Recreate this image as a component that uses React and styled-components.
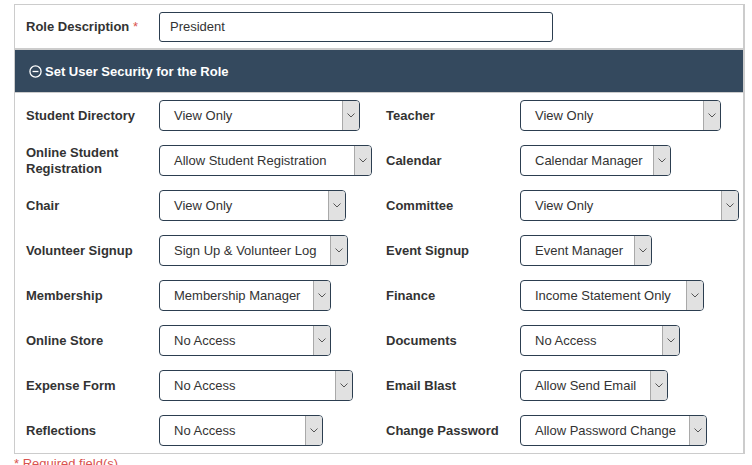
import React from "react";
import styled, { createGlobalStyle } from "styled-components";

const GlobalStyle = createGlobalStyle`
  body {
    margin: 0;
    background: #ffffff;
    font-family: "Liberation Sans", Arial, sans-serif;
    color: #333333;
  }
`;

const Page = styled.div`
  padding: 4px 0 0 14px;
  width: 731px;
`;

const Panel = styled.div`
  border: 1px solid #cccccc;
  border-right-width: 2px;
`;

const RoleRow = styled.div`
  display: flex;
  align-items: center;
  height: 43px;
  padding-left: 11px;
`;

const Label = styled.div`
  width: ${(p) => p.$width || 133}px;
  flex-shrink: 0;
  font-size: 13px;
  font-weight: bold;
  line-height: 16px;
  color: #333333;
  padding-right: 10px;
  box-sizing: border-box;
`;

const Star = styled.span`
  color: #d9534f;
  font-weight: normal;
`;

const TextInput = styled.div`
  width: 394px;
  height: 30px;
  box-sizing: border-box;
  border: 1px solid #2c3e50;
  border-radius: 3px;
  padding-left: 10px;
  display: flex;
  align-items: center;
  font-size: 13px;
  color: #333333;
`;

const Header = styled.div`
  background: #34495e;
  border-top: 2px solid #cccccc;
  border-bottom: 1px solid #cccccc;
  height: 42px;
  display: flex;
  align-items: center;
  gap: 3px;
  padding-left: 14px;
  color: #ffffff;
  font-size: 13px;
  font-weight: bold;
`;

const Grid = styled.div`
  display: grid;
  grid-template-columns: 133px 227px 134px 1fr;
  grid-auto-rows: 45px;
  align-items: center;
  padding-left: 11px;
`;

const SelectBox = styled.div`
  width: ${(p) => p.$width}px;
  height: 31px;
  box-sizing: border-box;
  border: 1px solid #2c3e50;
  border-radius: 4px;
  display: flex;
  overflow: hidden;
  font-size: 13px;
  color: #333333;
`;

const SelectText = styled.div`
  flex: 1;
  display: flex;
  align-items: center;
  padding-left: 14px;
  white-space: nowrap;
`;

const Arrow = styled.div`
  width: 16px;
  background: #e1e1e1;
  border-left: 1px solid #a9a9a9;
  display: flex;
  align-items: center;
  justify-content: center;
`;

const Note = styled.div`
  margin-top: 2px;
  font-size: 13px;
  color: #d9534f;
`;

const Select = ({ value, width }) => (
  <SelectBox $width={width}>
    <SelectText>{value}</SelectText>
    <Arrow>
      <svg width="8" height="5" viewBox="0 0 8 5">
        <path d="M0.5 0.5 L4 4 L7.5 0.5" fill="none" stroke="#555" strokeWidth="1" />
      </svg>
    </Arrow>
  </SelectBox>
);

const rows = [
  ["Student Directory", "View Only", 201, "Teacher", "View Only", 201],
  ["Online Student Registration", "Allow Student Registration", 213, "Calendar", "Calendar Manager", 151],
  ["Chair", "View Only", 187, "Committee", "View Only", 219],
  ["Volunteer Signup", "Sign Up & Volunteer Log", 189, "Event Signup", "Event Manager", 132],
  ["Membership", "Membership Manager", 172, "Finance", "Income Statement Only", 184],
  ["Online Store", "No Access", 172, "Documents", "No Access", 160],
  ["Expense Form", "No Access", 194, "Email Blast", "Allow Send Email", 148],
  ["Reflections", "No Access", 164, "Change Password", "Allow Password Change", 187],
];

const MinusCircle = () => (
  <svg width="13" height="13" viewBox="0 0 14 14">
    <circle cx="7" cy="7" r="6" fill="none" stroke="#fff" strokeWidth="1.4" />
    <line x1="3.8" y1="7" x2="10.2" y2="7" stroke="#fff" strokeWidth="1.4" />
  </svg>
);

export default function App() {
  return (
    <Page>
      <GlobalStyle />
      <Panel>
        <RoleRow>
          <Label>
            Role Description <Star>*</Star>
          </Label>
          <TextInput>President</TextInput>
        </RoleRow>
        <Header>
          <MinusCircle />
          <span>Set User Security for the Role</span>
        </Header>
        <Grid>
          {rows.map(([l1, v1, w1, l2, v2, w2]) => (
            <React.Fragment key={l1}>
              <Label>{l1}</Label>
              <div>
                <Select value={v1} width={w1} />
              </div>
              <Label $width={134}>{l2}</Label>
              <div>
                <Select value={v2} width={w2} />
              </div>
            </React.Fragment>
          ))}
        </Grid>
      </Panel>
      <Note>* Required field(s)</Note>
    </Page>
  );
}
